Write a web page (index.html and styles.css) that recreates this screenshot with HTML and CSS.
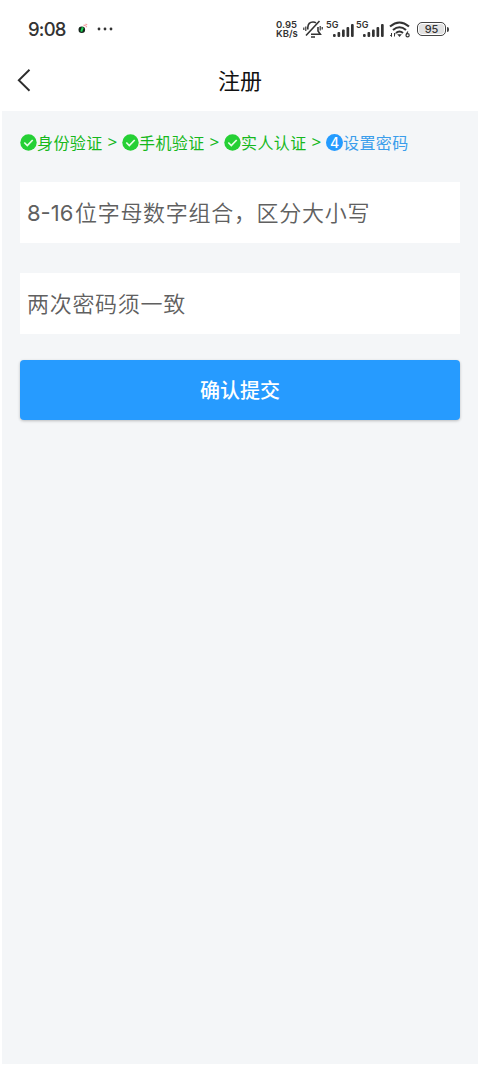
FILE: index.html
```html
<!DOCTYPE html>
<html lang="zh-CN">
<head>
<meta charset="utf-8">
<title>注册</title>
<link rel="stylesheet" href="styles.css">
</head>
<body>
<div class="status">
  <span class="clock">9:08</span>
  <svg class="app-dot" width="12" height="12" viewBox="0 0 12 12"><circle cx="4.8" cy="6.8" r="3.3" fill="#17251c"/><path d="M5.8 4.3L4.2 8.6" stroke="#20d858" stroke-width="2"/><path d="M6.5 2.2l2.2.5M8.5 1l1.7 1M8.7 3.5l1.3.4" stroke="#f6a0a5" stroke-width="1.2"/></svg>
  <svg class="dots" width="16" height="4" viewBox="0 0 16 4" fill="#333"><circle cx="2" cy="2" r="1.4"/><circle cx="8" cy="2" r="1.4"/><circle cx="14" cy="2" r="1.4"/></svg>
  <div class="speed"><span>0.95</span><span>KB/s</span></div>
  <svg class="mute" width="20" height="20" viewBox="0 0 20 20" fill="none" stroke="#333"><path d="M4.800 10.500V8.500C5 5 7 3 10 3c1.200 0 2.200.300 3 .900M15 8v4l2.300 3.200H8M3 16.500L16.500 2M8 18h4" stroke-width="1.600"/><path d="M2.800 7.500v4.500M.8 8.500v2.500M17.200 7v4.500M19.200 8v2.500" stroke-width="1.200"/></svg>
  <div class="cell"><span>5G</span><svg width="21" height="13" viewBox="0 0 21 13" fill="#333"><rect x="0" y="10" width="2.700" height="3" rx="1"/><rect x="4.500" y="8" width="2.700" height="5" rx="1"/><rect x="9" y="5.500" width="2.700" height="7.500" rx="1"/><rect x="13.500" y="3" width="2.700" height="10" rx="1"/><rect x="18" y="0" width="2.700" height="13" rx="1"/></svg></div>
  <div class="cell"><span>5G</span><svg width="21" height="13" viewBox="0 0 21 13" fill="#333"><rect x="0" y="10" width="2.700" height="3" rx="1"/><rect x="4.500" y="8" width="2.700" height="5" rx="1"/><rect x="9" y="5.500" width="2.700" height="7.500" rx="1"/><rect x="13.500" y="3" width="2.700" height="10" rx="1"/><rect x="18" y="0" width="2.700" height="13" rx="1"/></svg></div>
  <svg class="wifi" width="22" height="17" viewBox="0 0 22 17" fill="none" stroke="#333"><path d="M1 5.500q9.500-8 19 0M4 9q6.500-5.500 13 0M7 12q3.500-3 7 0" stroke-width="2.100"/><path d="M8.200 13.200h4.600L10.500 16z" fill="#333" stroke="none"/><path d="M2.500 12v3.500M1.300 14l1.200 1.500M5.500 15.500V12l1 1.200" stroke-width="1"/><path d="M18.900 10.500l-1.700 3" stroke-width="1.200"/><circle cx="18.600" cy="14.200" r="1.600" stroke-width="1.200"/></svg>
  <div class="battery"><span class="level">95</span><span class="tip"></span></div>
</div>
<header class="bar">
  <svg class="back" width="16" height="24" viewBox="0 0 16 24" fill="none" stroke="#2d2d2d" stroke-width="1.900"><path d="M12.500 1.700L1.800 12.200L12.500 22.700"/></svg>
  <h1>注册</h1>
</header>
<main class="page">
  <div class="steps">
    <div class="step"><svg class="mark" width="17" height="17" viewBox="0 0 17 17"><circle cx="8.500" cy="8.500" r="8.200" fill="#25d035"/><path d="M4.300 8.500l3 3L12.700 6" fill="none" stroke="#e9ffe9" stroke-width="1.700"/></svg><span>身份验证</span><i>&gt;</i></div>
    <div class="step"><svg class="mark" width="17" height="17" viewBox="0 0 17 17"><circle cx="8.500" cy="8.500" r="8.200" fill="#25d035"/><path d="M4.300 8.500l3 3L12.700 6" fill="none" stroke="#e9ffe9" stroke-width="1.700"/></svg><span>手机验证</span><i>&gt;</i></div>
    <div class="step"><svg class="mark" width="17" height="17" viewBox="0 0 17 17"><circle cx="8.500" cy="8.500" r="8.200" fill="#25d035"/><path d="M4.300 8.500l3 3L12.700 6" fill="none" stroke="#e9ffe9" stroke-width="1.700"/></svg><span>实人认证</span><i>&gt;</i></div>
    <div class="step current"><b class="number">4</b><span>设置密码</span></div>
  </div>
  <div class="field"><span class="latin">8-16</span><span>位字母数字组合，区分大小写</span></div>
  <div class="field second"><span>两次密码须一致</span></div>
  <button class="submit">确认提交</button>
</main>
</body>
</html>
```
FILE: styles.css
```css
* { box-sizing: border-box; }
body {
  margin: 0;
  height: 1066px;
  display: flex;
  flex-direction: column;
  background: #fff;
  font-family: "Noto Sans CJK SC", sans-serif;
}
.status {
  height: 49px;
  padding: 9px 0 0 28px;
  display: flex;
  align-items: center;
  color: #333;
}
.clock {
  width: 38px;
  font: 500 18.5px/24px Inter, sans-serif;
  letter-spacing: -.8px;
  white-space: nowrap;
}
.app-dot { margin-left: 11px; }
.dots { margin-left: 8px; }
.speed {
  width: 24px;
  margin-left: 163px;
  display: flex;
  flex-direction: column;
  gap: 1px;
  font: 600 9.5px/8px Inter, sans-serif;
}
.speed span { height: 8px; white-space: nowrap; }
.mute { margin-left: 3px; }
.cell {
  width: 28px;
  height: 17px;
  margin-left: 3px;
  display: flex;
  align-items: flex-end;
  flex: none;
}
.cell + .cell { margin-left: 2px; }
.cell span {
  width: 7px;
  align-self: flex-start;
  font: 600 9px/8px Inter, sans-serif;
}
.cell svg { margin-bottom: 1px; }
.wifi { margin-left: 5px; }
.battery {
  display: flex;
  align-items: center;
  margin-left: 6px;
}
.level {
  width: 29px;
  height: 14px;
  border: 1.5px solid #444;
  border-radius: 5px;
  background: #e2e2e2;
  box-shadow: inset 0 0 0 1px #fff;
  font: 500 11px/12px Inter, sans-serif;
  text-align: center;
}
.tip {
  width: 2px;
  height: 5px;
  margin-left: 1px;
  background: #444;
  border-radius: 0 2px 2px 0;
}
.bar {
  height: 62px;
  padding: 0 17px;
  display: grid;
  grid-template-columns: 16px 1fr 16px;
  align-items: center;
}
.bar h1 {
  margin: 0;
  padding-bottom: 2px;
  font-size: 22px;
  font-weight: 400;
  line-height: 32px;
  text-align: center;
  color: #111;
}
.page {
  flex: 1;
  margin: 0 2px 2px;
  padding: 19px 18px 0;
  background: #f4f6f8;
}
.steps {
  display: flex;
  height: 24px;
  color: #16b81d;
  font-size: 16px;
  line-height: 24px;
  letter-spacing: .4px;
}
.step {
  width: 102px;
  display: flex;
  flex: none;
  align-items: center;
  white-space: nowrap;
}
.step i {
  margin-left: 5px;
  font: 17px/24px "Noto Sans", sans-serif;
}
.mark { flex: none; }
.current { color: #3a9deb; }
.number {
  width: 17px;
  height: 17px;
  border-radius: 50%;
  background: #249bff;
  color: #fff;
  font: 500 14px/17px Inter, sans-serif;
  letter-spacing: 0;
  text-align: center;
}
.field {
  height: 61px;
  margin-top: 28px;
  padding: 0 7px 4px;
  display: flex;
  align-items: center;
  background: #fff;
  color: #606060;
  font-size: 22px;
  font-weight: 350;
  letter-spacing: .7px;
  white-space: nowrap;
}
.latin {
  width: 48px;
  padding-top: 4px;
  font: 400 22px/32px Inter, sans-serif;
  letter-spacing: 0;
}
.second { margin-top: 30px; }
.submit {
  display: block;
  width: 100%;
  height: 60px;
  margin-top: 26px;
  padding: 0;
  border: 0;
  border-radius: 4px;
  background: #269bff;
  box-shadow: 0 1px 3px rgba(0, 0, 0, .24);
  color: #fff;
  font: 500 20px/60px "Noto Sans CJK SC", sans-serif;
}
```
